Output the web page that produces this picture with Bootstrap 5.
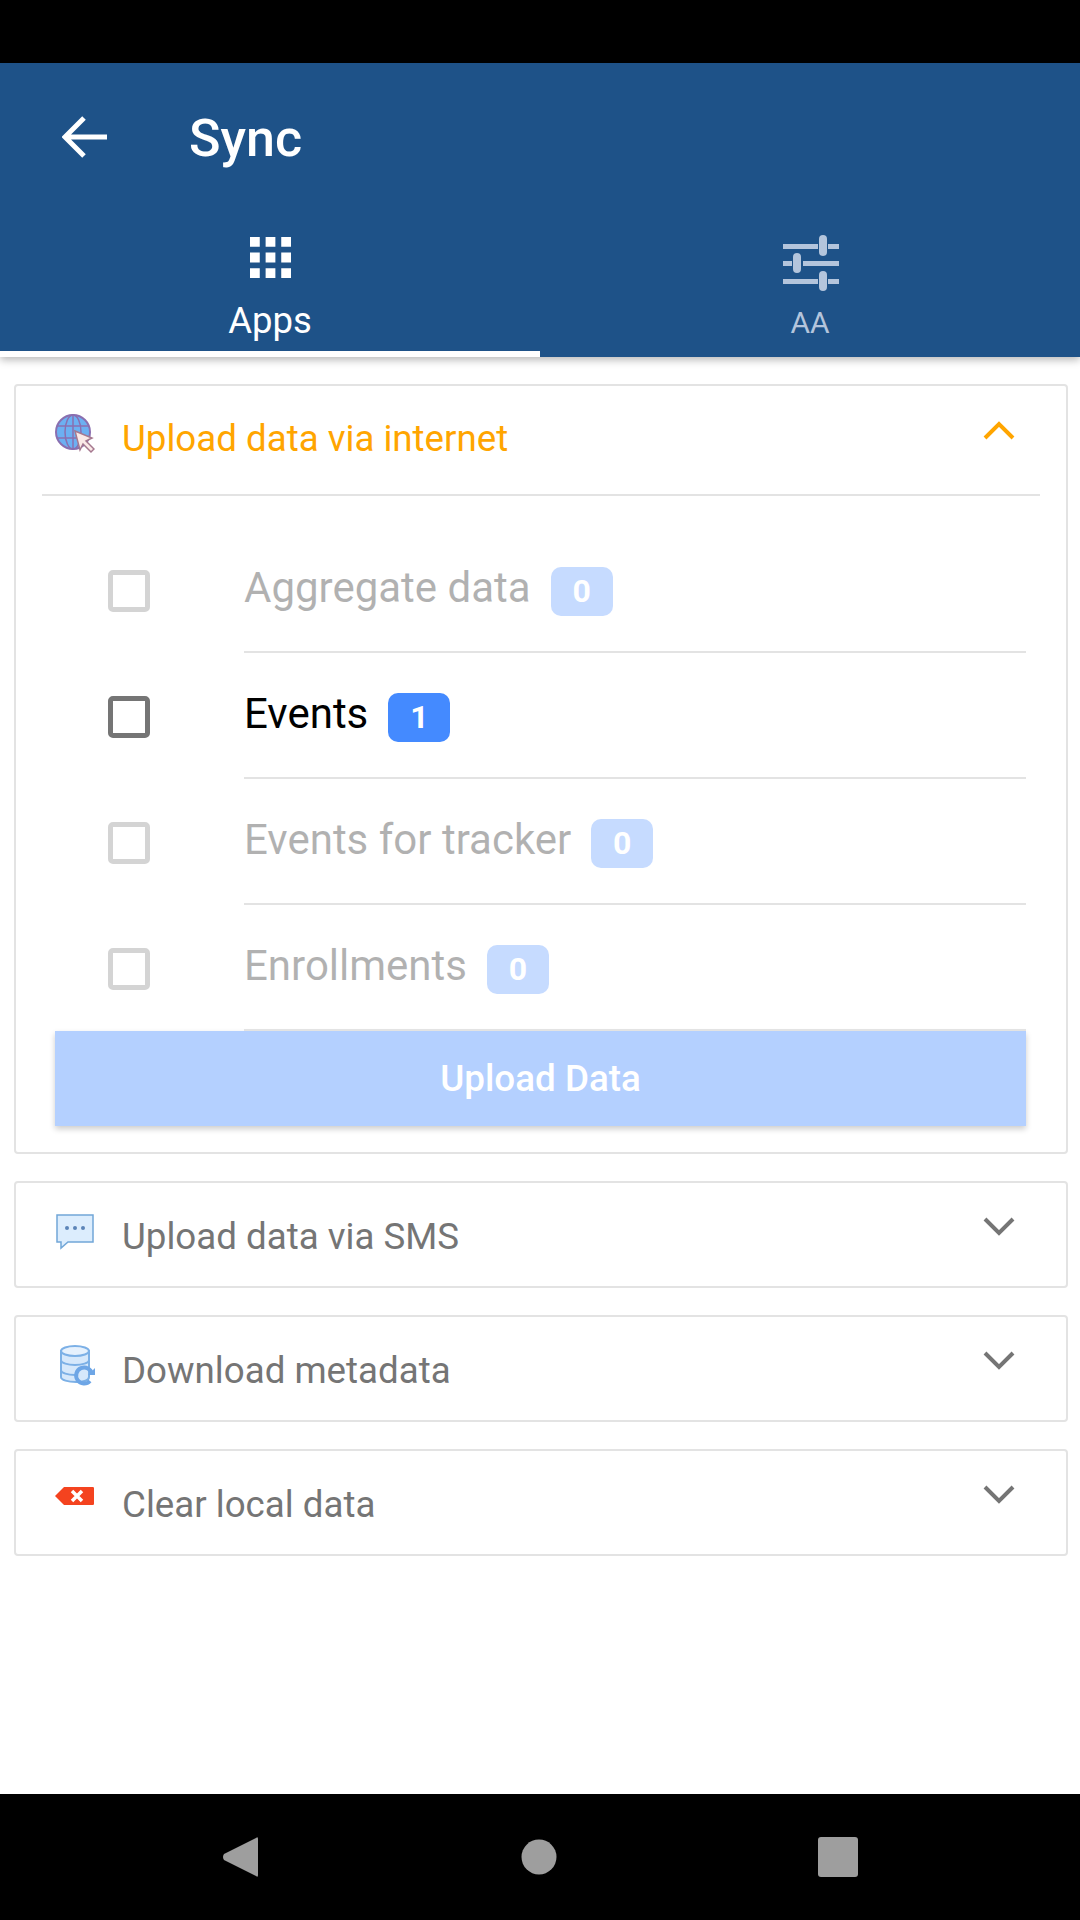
<!DOCTYPE html>
<html lang="en"><head><meta charset="utf-8"><title>Sync</title>
<link href="https://cdn.jsdelivr.net/npm/bootstrap@5.3.0/dist/css/bootstrap.min.css" rel="stylesheet">
<style>
html,body{margin:0;height:1920px;width:1080px;overflow:hidden;background:#fff;font-family:Roboto,"Liberation Sans",sans-serif}
.shell{height:1920px}
.stat-bar{height:63px;background:#000}
.app-head{height:294px;background:#1e5288;color:#fff;box-shadow:0 3px 8px rgba(0,0,0,.28);position:relative}
.tool-row{height:148px;padding-left:62px}
.tool-title{font-size:52px;font-weight:500;margin-left:82px;line-height:1;margin-top:4px}
.tab-cell{width:540px;height:146px;padding-top:26px;border-bottom:6px solid transparent}
.tab-cell.off-tab{padding-top:24px}
.tab-cell.on{border-bottom-color:#fff}
.tab-lab{font-size:36.500px;line-height:44px;margin-top:21px}
.tab-lab.off{font-size:30px;line-height:44px;margin-top:10px;color:#b4c5dc}
.slide-ico{margin-left:auto;margin-right:auto;position:relative;left:1px}
.page-main{padding:27px 12px 0 14px}
.acc{border:2px solid #e3e3e3;border-radius:4px;margin-bottom:27px;background:#fff}
.acc-head{height:103px;padding:27px 51px 0 39px}
.acc-ico{width:40px;height:44px;flex:none}
.acc-txt{font-size:36.700px;line-height:53px;color:#757575;margin-left:27px;flex-grow:1}
.acc-txt.hot{color:#ffa500;line-height:52px}
.acc-chev{width:32px;height:20px;margin-top:7px;flex:none}
.acc-rule{height:2px;background:#e3e3e3;margin:5px 26px 0 26px}
.acc-body{padding:31px 40px 26px 39px}
.sel-row{height:126px}
.sel-chk{width:189px;padding-left:53px;flex:none}
.sel-box.form-check-input{width:42px;height:42px;margin:2px 0 0;border:5px solid #757575;border-radius:5px;background:#fff;opacity:1}
.sel-cell{height:126px;border-bottom:2px solid #e3e3e3;flex-grow:1}
.sel-name{font-size:42px;line-height:50px;color:#000;margin-top:-3px}
.sel-num{background:#448aff;color:#fff;font-size:32px;font-weight:700;font-family:Roboto,sans-serif;line-height:49px;height:49px;width:62px;padding:0;border-radius:10px;margin-left:20px;margin-top:4px}
.is-off>*,.is-off .sel-name,.is-off .sel-num{opacity:.3}
.is-off>.sel-cell{opacity:1}
.send-btn.btn{height:95px;background:#b4d0ff;border:0;color:#fff;font-size:36.800px;font-weight:500;border-radius:0;opacity:1;box-shadow:0 3px 6px rgba(0,0,0,.2);display:block;width:100%}
.sys-nav{position:absolute;left:0;top:1794px;width:1080px;height:126px;background:#000}
.sys-nav svg{position:absolute;left:0;top:0}
</style></head>
<body>
<div class="shell position-relative">
<div class="stat-bar"></div>
<header class="app-head">
 <div class="tool-row d-flex align-items-center">
  <svg width="45" height="44" viewBox="0 0 45 44" fill="none" stroke="#fff" stroke-width="5"><path d="M45 22H4M22 3 3 22l19 19"/></svg>
  <div class="tool-title">Sync</div>
 </div>
 <div class="d-flex">
  <div class="tab-cell on text-center">
   <svg class="d-block mx-auto" width="41" height="41" viewBox="0 0 42 42" fill="#fff"><path d="M0 0h10v10H0zM16 0h10v10H16zM32 0h10v10H32zM0 16h10v10H0zM16 16h10v10H16zM32 16h10v10H32zM0 32h10v10H0zM16 32h10v10H16zM32 32h10v10H32z"/></svg>
   <div class="tab-lab">Apps</div>
  </div>
  <div class="tab-cell off-tab text-center">
   <svg class="d-block slide-ico" width="56" height="56" viewBox="0 0 56 56" fill="#b4c5dc"><path d="M0 9h35v5H0zM45 9h11v5H45zM0 26h9v5H0zM20 26h36v5H20zM0 44h35v5H0zM45 44h11v5H45z"/><rect x="36" y="0" width="8" height="21" rx="4"/><rect x="10" y="18" width="8" height="20" rx="4"/><rect x="36" y="36" width="8" height="20" rx="4"/></svg>
   <div class="tab-lab off">AA</div>
  </div>
 </div>
</header>
<main class="page-main">
 <section class="acc">
  <div class="acc-head d-flex align-items-start">
   <svg class="acc-ico" viewBox="0 0 40 44"><circle cx="18" cy="19" r="17" fill="#6cb0f2" stroke="#8a6fb0" stroke-width="2"/><ellipse cx="18" cy="19" rx="8" ry="17" fill="none" stroke="#8a6fb0" stroke-width="1.500"/><path d="M2 13h32M2 25h32M18 2v34" stroke="#8a6fb0" stroke-width="1.500" fill="none"/><path d="m20 18 17 7-6 3 8 8-3 3-8-8-3 6z" fill="#fbe9e7" stroke="#a5788f" stroke-width="1.500"/></svg>
   <div class="acc-txt hot">Upload data via internet</div>
   <svg class="acc-chev" viewBox="0 0 32 20" fill="none" stroke="#ffa500" stroke-width="4"><path d="m2 18 14-14 14 14"/></svg>
  </div>
  <div class="acc-rule"></div>
  <div class="acc-body">
   <div class="sel-row d-flex align-items-center is-off">
    <div class="sel-chk"><input class="sel-box form-check-input d-block" type="checkbox" aria-label="Aggregate data"></div>
    <div class="sel-cell d-flex align-items-center"><span class="sel-name">Aggregate data</span><span class="badge sel-num">0</span></div>
   </div>
   <div class="sel-row d-flex align-items-center">
    <div class="sel-chk"><input class="sel-box form-check-input d-block" type="checkbox" aria-label="Events"></div>
    <div class="sel-cell d-flex align-items-center"><span class="sel-name">Events</span><span class="badge sel-num">1</span></div>
   </div>
   <div class="sel-row d-flex align-items-center is-off">
    <div class="sel-chk"><input class="sel-box form-check-input d-block" type="checkbox" aria-label="Events for tracker"></div>
    <div class="sel-cell d-flex align-items-center"><span class="sel-name">Events for tracker</span><span class="badge sel-num">0</span></div>
   </div>
   <div class="sel-row d-flex align-items-center is-off">
    <div class="sel-chk"><input class="sel-box form-check-input d-block" type="checkbox" aria-label="Enrollments"></div>
    <div class="sel-cell d-flex align-items-center"><span class="sel-name">Enrollments</span><span class="badge sel-num">0</span></div>
   </div>
   <button class="btn send-btn" type="button">Upload Data</button>
  </div>
 </section>
 <section class="acc">
  <div class="acc-head d-flex align-items-start">
   <svg class="acc-ico" viewBox="0 0 40 44"><path d="M2 5h36v27H13l-7 6v-6H2z" fill="#dcedfd" stroke="#72a7d8" stroke-width="1.500"/><circle cx="12" cy="18" r="2" fill="#5b84b8"/><circle cx="20" cy="18" r="2" fill="#5b84b8"/><circle cx="28" cy="18" r="2" fill="#5b84b8"/></svg>
   <div class="acc-txt">Upload data via SMS</div>
   <svg class="acc-chev" viewBox="0 0 32 20" fill="none" stroke="#757575" stroke-width="4"><path d="m2 2 14 14 14-14"/></svg>
  </div>
 </section>
 <section class="acc">
  <div class="acc-head d-flex align-items-start">
   <svg class="acc-ico" viewBox="0 0 40 44"><path d="M6 7v26c0 3 7 5 15 5s13-2 13-5V7z" fill="#d6e8fb" stroke="#7cb0e6" stroke-width="2"/><ellipse cx="20" cy="7" rx="14" ry="5" fill="#e6f1fd" stroke="#7cb0e6" stroke-width="2"/><path d="M6 16c0 3 7 5 14 5s14-2 14-5M6 26c0 3 7 5 14 5" fill="none" stroke="#7cb0e6" stroke-width="2"/><path d="M37 30a8 8 0 1 0-2 7" fill="none" stroke="#6ea6e6" stroke-width="4"/><path d="M41 23v8h-8z" fill="#6ea6e6"/></svg>
   <div class="acc-txt">Download metadata</div>
   <svg class="acc-chev" viewBox="0 0 32 20" fill="none" stroke="#757575" stroke-width="4"><path d="m2 2 14 14 14-14"/></svg>
  </div>
 </section>
 <section class="acc">
  <div class="acc-head d-flex align-items-start">
   <svg class="acc-ico" viewBox="0 0 40 44"><path d="M9 9h29a1.500 1.500 0 0 1 1 1v16a1.500 1.500 0 0 1-1 1H9l-9-9z" fill="#f4431f"/><path d="m17 13 10 10M27 13 17 23" stroke="#fff" stroke-width="3.500"/></svg>
   <div class="acc-txt">Clear local data</div>
   <svg class="acc-chev" viewBox="0 0 32 20" fill="none" stroke="#757575" stroke-width="4"><path d="m2 2 14 14 14-14"/></svg>
  </div>
 </section>
</main>
<nav class="sys-nav">
 <svg width="1080" height="126" viewBox="0 0 1080 126" fill="#9e9e9e"><path d="M256 44q2-2 2 1v36q0 3-2 1L224 66q-2-3 0-6z"/><circle cx="539" cy="63" r="17.500"/><rect x="818" y="43" width="40" height="40" rx="3"/></svg>
</nav>
</div>
<script src="https://cdn.jsdelivr.net/npm/bootstrap@5.3.0/dist/js/bootstrap.bundle.min.js"></script>
</body></html>
